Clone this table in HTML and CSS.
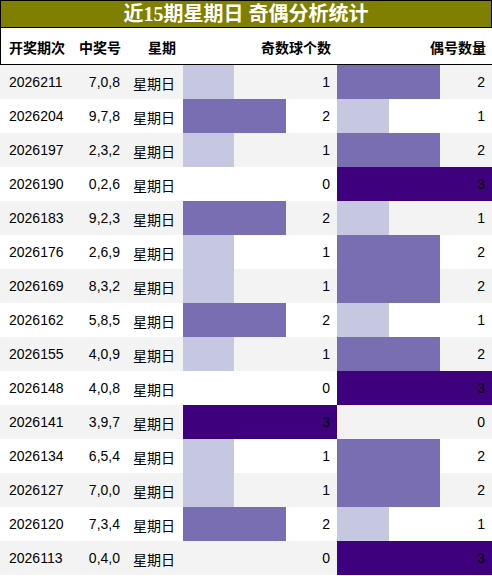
FILE: index.html
```html
<!DOCTYPE html>
<html>
<head>
<meta charset="utf-8">
<link rel="stylesheet" href="styles.css">
</head>
<body>
<div class="page">
  <div class="title">近15期星期日 奇偶分析统计</div>
  <div class="row head">
    <div class="c1">开奖期次</div>
    <div class="c2">中奖号</div>
    <div class="c3">星期</div>
    <div class="c4">奇数球个数</div>
    <div class="c5">偶号数量</div>
  </div>
  <div id="rows"></div>
</div>
<script src="app.js"></script>
</body>
</html>
```
FILE: styles.css
```css
html, body { margin: 0; padding: 0; background: #fff; }
.page { width: 492px; font-family: "Liberation Sans", "Noto Sans CJK SC", sans-serif; color: #000; }
.title {
  height: 26px;
  background: #808000;
  border: 1px solid #000;
  color: #fff;
  font-family: "Liberation Serif", "Noto Sans CJK SC", serif;
  font-weight: bold;
  font-size: 20px;
  line-height: 26px;
  text-align: center;
}
.row {
  display: grid;
  grid-template-columns: 70px 58px 55px 154px 155px;
  height: 34px;
  align-items: center;
  font-size: 14px;
}
.row.head {
  height: 37px;
  padding-top: 2px;
  border-bottom: 1.5px solid #000;
  border-left: 1px solid #000;
  font-weight: bold;
  font-family: "Noto Sans CJK SC", sans-serif;
  font-size: 14px;
  box-sizing: border-box;
}
.row.head .c1 { padding-left: 8px; }
.row.alt { background: #f3f3f3; }
.c1 { padding-left: 9px; }
.c2 { text-align: right; padding-right: 8px; }
.c3 { text-align: right; padding-right: 8px; font-family: "Noto Sans CJK SC", sans-serif; font-size: 14px; padding-top: 2px; }
.row.head .c3 { padding-top: 0; }
.c4, .c5 { text-align: right; padding-right: 7px; }
.bar-cell {
  display: grid;
  height: 34px;
  align-items: center;
}
.bar-cell > * { grid-area: 1 / 1; }
.bar { height: 34px; justify-self: start; }
.num { text-align: right; padding-right: 7px; }
.b1 { background: #c6c7e1; }
.b2 { background: #796eb1; }
.b3 { background: #3f007d; }
```
FILE: app.js
```js
var data = [
  ["2026211","7,0,8",1,2],
  ["2026204","9,7,8",2,1],
  ["2026197","2,3,2",1,2],
  ["2026190","0,2,6",0,3],
  ["2026183","9,2,3",2,1],
  ["2026176","2,6,9",1,2],
  ["2026169","8,3,2",1,2],
  ["2026162","5,8,5",2,1],
  ["2026155","4,0,9",1,2],
  ["2026148","4,0,8",0,3],
  ["2026141","3,9,7",3,0],
  ["2026134","6,5,4",1,2],
  ["2026127","7,0,0",1,2],
  ["2026120","7,3,4",2,1],
  ["2026113","0,4,0",0,3]
];
var rows = document.getElementById("rows");
function barCell(v, w) {
  var cell = document.createElement("div");
  cell.className = "bar-cell";
  var bar = document.createElement("div");
  if (v > 0) {
    bar.className = "bar b" + v;
    bar.style.width = Math.round(w * v / 3) + "px";
  } else {
    bar.className = "bar";
    bar.style.width = "0px";
  }
  var n = document.createElement("div");
  n.className = "num";
  n.textContent = v;
  cell.appendChild(bar);
  cell.appendChild(n);
  return cell;
}
data.forEach(function (d, i) {
  var r = document.createElement("div");
  r.className = "row" + (i % 2 === 0 ? " alt" : "");
  var c1 = document.createElement("div"); c1.className = "c1"; c1.textContent = d[0];
  var c2 = document.createElement("div"); c2.className = "c2"; c2.textContent = d[1];
  var c3 = document.createElement("div"); c3.className = "c3"; c3.textContent = "星期日";
  r.appendChild(c1); r.appendChild(c2); r.appendChild(c3);
  r.appendChild(barCell(d[2], 154));
  r.appendChild(barCell(d[3], 155));
  rows.appendChild(r);
});
```
